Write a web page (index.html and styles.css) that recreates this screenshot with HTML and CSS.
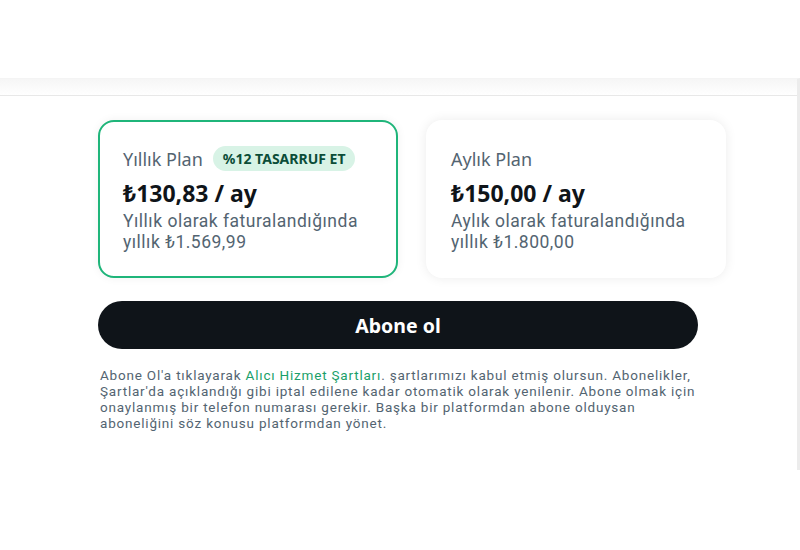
FILE: index.html
```html
<!DOCTYPE html>
<html lang="tr">
<head>
  <meta charset="UTF-8">
  <title>Abone ol</title>
  <link rel="stylesheet" href="styles.css">
</head>
<body>
  <div class="ust-bosluk"></div>
  <div class="icerik">
    <div class="planlar">
      <div class="plan secili">
        <div class="plan-baslik">
          <span>Yıllık Plan</span>
          <span class="rozet">%12 TASARRUF ET</span>
        </div>
        <div class="fiyat">₺130,83 / ay</div>
        <div class="aciklama">Yıllık olarak faturalandığında<br>yıllık ₺1.569,99</div>
      </div>
      <div class="plan">
        <div class="plan-baslik">
          <span>Aylık Plan</span>
        </div>
        <div class="fiyat">₺150,00 / ay</div>
        <div class="aciklama">Aylık olarak faturalandığında<br>yıllık ₺1.800,00</div>
      </div>
    </div>

    <button class="abone-btn">Abone ol</button>

    <p class="kosullar">
      Abone Ol'a tıklayarak <a href="#">Alıcı Hizmet Şartları</a>. şartlarımızı kabul etmiş olursun. Abonelikler,<br>
      Şartlar'da açıklandığı gibi iptal edilene kadar otomatik olarak yenilenir. Abone olmak için<br>
      onaylanmış bir telefon numarası gerekir. Başka bir platformdan abone olduysan<br>
      aboneliğini söz konusu platformdan yönet.
    </p>
  </div>
</body>
</html>
```

FILE: styles.css
```css
body {
  margin: 0;
  font-family: "Noto Sans", sans-serif;
  background-color: #fff;
  color: #0f1419;
}

.ust-bosluk {
  height: 78px;
}

.icerik {
  height: 392px;
  padding: 41px 0 0 98px;
  background: linear-gradient(#f6f6f6, #ffffff 17px);
  border-top: 1px solid #f4f4f4;
  border-right: 3px solid #ececec;
  box-sizing: border-box;
  position: relative;
}

.icerik::before {
  content: "";
  position: absolute;
  left: 0;
  right: 0;
  top: 16px;
  border-top: 1px solid #e8e8e8;
}

.planlar {
  display: flex;
  gap: 28px;
}

.plan {
  width: 300px;
  height: 158px;
  box-sizing: border-box;
  padding: 0 23px;
  border: 2px solid transparent;
  border-radius: 16px;
  background: #fff;
  box-shadow: 0 0 12px rgba(0, 0, 0, 0.08);
  display: flex;
  flex-direction: column;
  justify-content: center;
}

.plan.secili {
  border-color: #1fb57a;
  box-shadow: 0 0 10px rgba(0, 0, 0, 0.06);
}

.plan-baslik {
  display: flex;
  align-items: center;
  gap: 10px;
  font-size: 18px;
  color: #536471;
  height: 26px;
}

.rozet {
  background-color: #d8f3e6;
  color: #0b4d38;
  font-size: 14px;
  font-weight: bold;
  line-height: 19px;
  padding: 3px 10px;
  border-radius: 13px;
}

.fiyat {
  font-size: 23px;
  font-weight: bold;
  margin-top: 6px;
  line-height: 30px;
}

.aciklama {
  font-family: Roboto, sans-serif;
  font-size: 17.5px;
  letter-spacing: 0.5px;
  color: #536471;
  line-height: 21px;
  margin-top: 3px;
}

.abone-btn {
  display: block;
  width: 600px;
  height: 48px;
  margin-top: 23px;
  border: none;
  border-radius: 24px;
  background-color: #0f1419;
  color: #fff;
  font-family: "Noto Sans", sans-serif;
  font-size: 19.5px;
  font-weight: bold;
  cursor: pointer;
}

.kosullar {
  width: 600px;
  margin: 18px 0 0 2px;
  font-family: Roboto, sans-serif;
  font-size: 13.5px;
  letter-spacing: 0.8px;
  line-height: 16px;
  color: #536471;
  white-space: nowrap;
}

.kosullar a {
  color: #1a9f6a;
  text-decoration: none;
}
```
